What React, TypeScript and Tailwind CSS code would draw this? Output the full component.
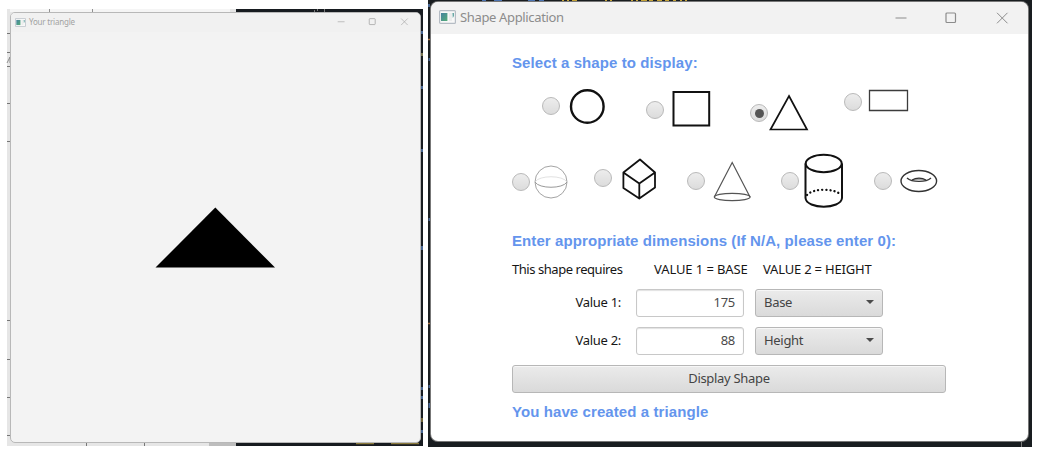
import { useState, type ReactNode } from "react";

const heading = "font-['Liberation_Sans',sans-serif] text-[15px] leading-[20px] font-bold tracking-[0.09px] text-[#6495ed] whitespace-nowrap";
const body = "font-['Noto_Sans',sans-serif] text-[13px] whitespace-nowrap";

function AppIcon({ className }: { className: string }) {
  return (
    <svg className={className} viewBox="0 0 17 14">
      <defs>
        <linearGradient id="teal" x1="0" y1="0" x2="1" y2="1">
          <stop offset="0" stopColor="#4682a0" />
          <stop offset="1" stopColor="#55ad78" />
        </linearGradient>
      </defs>
      <rect x=".6" y=".6" width="15.8" height="12.8" rx="1" fill="#f8f8f8" stroke="#b5bcc4" strokeWidth="1.2" />
      <rect x="2" y="3" width="6.4" height="8" fill="url(#teal)" />
      <path d="M10 3h3v8h-3z" fill="#eceded" />
      <path d="M13.4 3h1.6v3l-1.2 2z" fill="#68a8a5" />
    </svg>
  );
}

function WindowButtons({ className }: { className: string }) {
  return (
    <svg className={className} viewBox="0 0 114 12" fill="none" stroke="currentColor">
      <path d="M.5 6h11" />
      <rect x="51" y="1" width="9.5" height="9.5" rx="1" strokeWidth="1.2" />
      <path d="M102 .8l10.5 10.5M112.5 .8L102 11.3" />
    </svg>
  );
}

function Choice({ wrap, radio, checked, onPick, label, children }: {
  wrap: string; radio: string; checked: boolean; onPick: () => void; label: string; children: ReactNode;
}) {
  return (
    <button type="button" role="radio" aria-checked={checked} aria-label={label} onClick={onPick} className={`flex shrink-0 items-start ${wrap}`}>
      <span className={`flex size-[18px] shrink-0 items-center justify-center rounded-full border border-[#b9b9b9] bg-linear-to-b from-[#ededed] to-[#dcdcdc] ${radio}`}>
        {checked && <span className="size-[9px] rounded-full bg-[#555]" />}
      </span>
      {children}
    </button>
  );
}

function Field({ label, value, option }: { label: string; value: string; option: string }) {
  return (
    <div className={`flex h-[28px] items-center ${body}`}>
      <span className="w-[109px] text-right text-[#161616]"><span className="inline-block tracking-[-0.3px]">{label}</span></span>
      <span className="ml-[15px] flex h-[28px] w-[108px] items-center justify-end rounded-[3px] border border-[#c8c8c8] bg-white pr-[8px] text-[#4a4a4a] shadow-[inset_0_1px_1px_#e2e2e2] tracking-[-0.3px]">{value}</span>
      <span className="ml-[11px] flex h-[28px] w-[128px] items-center justify-between rounded-[3px] border border-[#b7b7b7] bg-linear-to-b from-[#ebebeb] to-[#dadada] pr-[8px] pl-[8px] text-[#444] shadow-[inset_0_1px_0_#f7f7f7] tracking-[-0.3px]">
        {option}
        <svg className="mb-[2px] h-[4px] w-[8px]" viewBox="0 0 8 4"><path d="M0 0h8L4 4z" fill="#4b4b4b" /></svg>
      </span>
    </div>
  );
}

function Backdrop() {
  return (
    <svg className="absolute top-0 left-0 h-[451px] w-[1041px]" viewBox="0 0 1041 451">
      <path d="M7 9h416v437H7z" fill="#171b20" />
      <path d="M7 9h229v437H7z" fill="#e6e6e6" />
      <path d="M10 9h220v3H10z" fill="#f5f5f5" />
      <path d="M209 442h27v4h-27z" fill="#bdbdbd" />
      <path d="M7 33.500h3M7 52.500h3M7 66.500h3M7 103.500h3M7 141.500h3M7 320.500h3M7 359.500h3M7 397.500h3M7 435.500h3M86.500 442v4M144.500 442v4" stroke="#777" />
      <path d="M7 63l3-6v6M49.500 9v3M92.500 9v3" stroke="#777" fill="none" strokeWidth=".8" />
      <path d="M314.500 10v3M317.500 9v2M324.500 9v3" stroke="#777" />
      <path d="M422 31v3M422 53v3M422 86v3M422 149v3M422 246v4M422 387v3M422 396v3M422 430v3" stroke="#476591" strokeWidth="2" />
      <path d="M422 53v3M422 418v4M356 443.500h18M391 443.500h28" stroke="#8b7a3c" strokeWidth="1.5" />
      <path d="M428 0h604v447H428z" fill="#191d20" />
      <path d="M482 .8h4m8 0h8m26 0h7m4 0h5" stroke="#4b73b1" strokeWidth="1.500" />
      <path d="M562 .8h2m3 0h2m3 0h5m28 0h2m3 0h2m19 0h2m3 0h2m3 0h6m2 0h4m4 0h5m3 0h4m4 0h3m4 0h2m3 0h2" stroke="#c5a336" strokeWidth="1.500" />
      <path d="M429 4v3M429.500 58v3M429.500 218v3M429.500 385v3M429.500 403v5" stroke="#476591" strokeWidth="2" />
      <path d="M428 39.500h2M428 323.500h2" stroke="#aa7142" strokeWidth="1.500" />
      <path d="M1021.500 442v5" stroke="#777" />
    </svg>
  );
}

export default function App() {
  const [shape, setShape] = useState("triangle");
  const pick = (name: string) => ({ label: name, checked: shape === name, onPick: () => setShape(name) });
  return (
    <div className="relative h-[451px] w-[1041px] overflow-hidden bg-white">
      <Backdrop />
      <div className="relative flex items-start">
        <section className="mt-[12px] ml-[10px] flex h-[431px] w-[411px] shrink-0 flex-col rounded-[5px] border border-[#b8b8b8] bg-[#f3f3f3]">
          <header className="flex h-[19px] shrink-0 items-center rounded-t-[4px] bg-[#f1f1f1] pl-[4px] text-[#a2a2a2]">
            <AppIcon className="mt-[-1px] h-[9px] w-[11px]" />
            <span className="mt-[-1px] ml-[3px] font-['Noto_Sans',sans-serif] text-[8px] tracking-[-0.2px] whitespace-nowrap">Your triangle</span>
            <WindowButtons className="mt-[-1px] mr-[11px] ml-auto h-[7.500px] w-[72px]" />
          </header>
          <svg className="mt-[175px] ml-[144px] h-[62px] w-[121px]" viewBox="155 207 121 62"><path d="M215.300 207.500L275 267.600H155.500z" /></svg>
        </section>

        <section className="mt-[2px] ml-[10px] flex h-[439px] w-[597px] shrink-0 flex-col rounded-[7px] bg-white shadow-[0_0_0_1px_#777]">
          <header className="flex h-[32px] shrink-0 items-center rounded-t-[7px] bg-[#f2f2f2] pl-[8px] text-[#8c8c8c]">
            <AppIcon className="mt-[-2px] h-[14px] w-[17px]" />
            <span className={`mt-[-1px] ml-[4px] tracking-[-0.35px] ${body}`}>Shape Application</span>
            <WindowButtons className="mr-[19px] mb-[1px] ml-auto h-[12px] w-[114px]" />
          </header>
          <main className="flex flex-col pl-[81px]">
            <h1 className={`mt-[19px] ${heading}`}>Select a shape to display:</h1>

            <div role="radiogroup" className="mt-[13px] flex h-[64px] items-start pl-[30px]">
              <Choice {...pick("circle")} wrap="w-[104px]" radio="mt-[11px]">
                <svg className="mt-[2px] ml-[9px] h-[37px] w-[37px]" viewBox="569 88 37 37"><circle cx="587.300" cy="106.500" r="16.300" fill="none" stroke="#111" strokeWidth="2.400" /></svg>
              </Choice>
              <Choice {...pick("square")} wrap="w-[104px]" radio="mt-[15px]">
                <svg className="mt-[4px] ml-[8px] h-[38px] w-[40px]" viewBox="672 90 40 38"><path d="M673.500 92h35.700v33.500h-35.700z" fill="none" stroke="#111" strokeWidth="2" /></svg>
              </Choice>
              <Choice {...pick("triangle")} wrap="w-[94px]" radio="mt-[18px]">
                <svg className="mt-[7px] ml-[-1px] h-[38px] w-[42px]" viewBox="768 93 42 38"><path d="M790 96L808 129.500H771.500z" fill="none" stroke="#111" strokeWidth="1.700" /></svg>
              </Choice>
              <Choice {...pick("rectangle")} wrap="w-[66px]" radio="mt-[7px]">
                <svg className="mt-[3px] ml-[6px] h-[23px] w-[42px]" viewBox="868 89 42 23"><path d="M869.500 90.500h38v20h-38z" fill="none" stroke="#3c3c3c" strokeWidth="1.300" /></svg>
              </Choice>
            </div>

            <div role="radiogroup" className="flex h-[81px] items-start">
              <Choice {...pick("sphere")} wrap="w-[82px]" radio="mt-[23px]">
                <svg className="mt-[14px] ml-[2px] h-[36px] w-[40px]" viewBox="532 164 40 36" fill="none" stroke="#999">
                  <circle cx="551" cy="182" r="16" strokeWidth=".9" />
                  <path d="M535 182c4 7 28 7 32 0" /><path d="M535 182c4-7 28-7 32 0" stroke="#d4d4d4" strokeWidth=".7" />
                </svg>
              </Choice>
              <Choice {...pick("cube")} wrap="w-[93px]" radio="mt-[19px]">
                <svg className="mt-[7px] ml-[8px] h-[44px] w-[38px]" viewBox="620 157 38 44" fill="none" stroke="#111" strokeWidth="1.800" strokeLinejoin="round">
                  <path d="M640 159.500L655 172.500V187.500L639.300 198.500L623.400 188V172.500zM623.400 172.500L639.300 183.500L655 172.500M639.300 183.500V198.500" />
                </svg>
              </Choice>
              <Choice {...pick("cone")} wrap="w-[94px]" radio="mt-[22px]">
                <svg className="mt-[10px] ml-[6px] h-[43px] w-[42px]" viewBox="711 160 42 43" fill="none" stroke="#555" strokeWidth="1.200">
                  <path d="M714.300 197L732.200 162.500L750 197" /><ellipse cx="732.200" cy="197" rx="17.900" ry="3.700" />
                </svg>
              </Choice>
              <Choice {...pick("cylinder")} wrap="w-[93px]" radio="mt-[22px]">
                <svg className="mt-[2px] ml-[3px] h-[58px] w-[44px]" viewBox="803 152 44 58" fill="none" stroke="#111" strokeWidth="2">
                  <ellipse cx="824.700" cy="163.500" rx="18" ry="8.800" /><path d="M806.500 163.500V198c1 11.500 35.500 11.500 36.500 0V163.500" />
                  <path d="M808 195c6-7 28-7 34 0" strokeWidth="2.300" strokeLinecap="round" strokeDasharray=".1 4" />
                </svg>
              </Choice>
              <Choice {...pick("torus")} wrap="w-[66px]" radio="mt-[22px]">
                <svg className="mt-[18px] ml-[7px] h-[26px] w-[40px]" viewBox="899 168 40 26" fill="none" stroke="#333" strokeWidth="1.400">
                  <ellipse cx="918.800" cy="181" rx="17.800" ry="10.500" />
                  <path d="M907 178c5 4.500 19 4.500 24 0" /><path d="M912 180c4-2.500 10-2.500 14 0" fill="#aaa" strokeWidth="1.200" />
                </svg>
              </Choice>
            </div>

            <h2 className={heading}>Enter appropriate dimensions (If N/A, please enter 0):</h2>
            <div className={`mt-[9px] flex h-[20px] items-center text-[#161616] ${body}`}>
              <span className="w-[142px] tracking-[-0.45px]">This shape requires</span>
              <span className="w-[109px] tracking-[-0.1px]">VALUE 1 = BASE</span>
              <span className="tracking-[-0.2px]">VALUE 2 = HEIGHT</span>
            </div>
            <div className="mt-[9px] flex flex-col gap-[10px]">
              <Field label="Value 1:" value="175" option="Base" />
              <Field label="Value 2:" value="88" option="Height" />
            </div>
            <button type="button" className={`mt-[10px] h-[28px] w-[434px] rounded-[3px] border border-[#b7b7b7] bg-linear-to-b from-[#ebebeb] to-[#dadada] text-[#444] shadow-[inset_0_1px_0_#f7f7f7] tracking-[-0.3px] ${body}`}>Display Shape</button>
            <p className={`mt-[9px] ${heading}`}>You have created a triangle</p>
          </main>
        </section>
      </div>
    </div>
  );
}
